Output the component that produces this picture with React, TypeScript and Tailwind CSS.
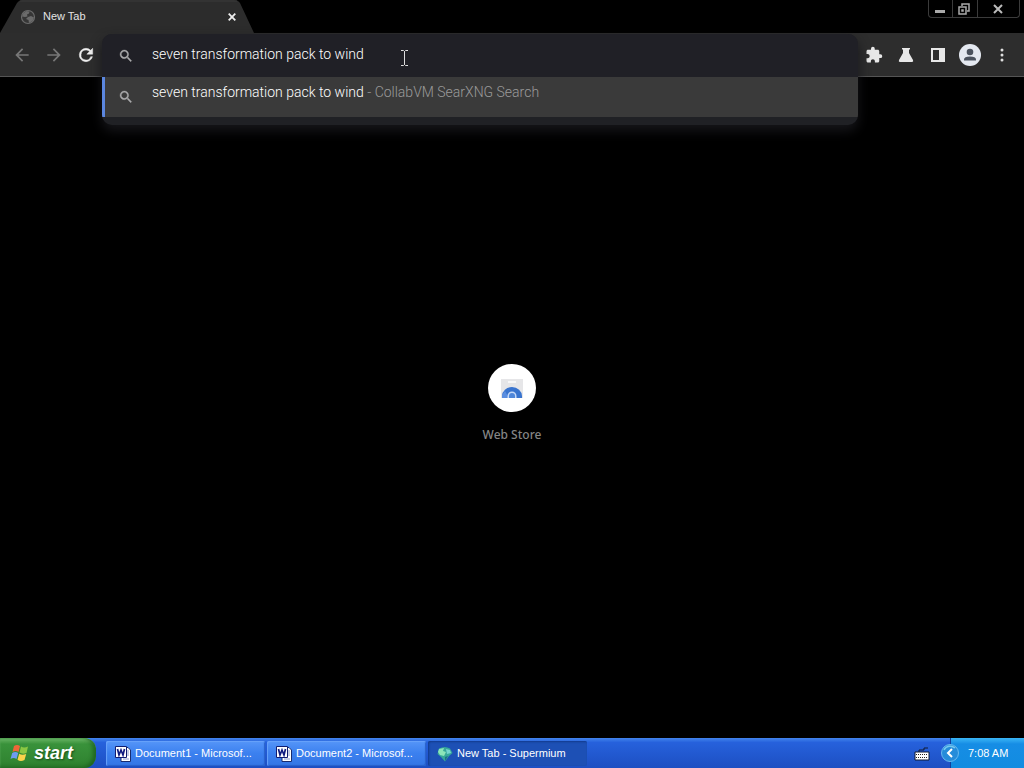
import { useState } from "react";
import type { ReactNode } from "react";

const query = "seven transformation pack to wind";

function SearchIcon() {
  return (
    <svg viewBox="0 0 24 24" className="size-4 shrink-0 fill-[#a9a9ab] stroke-[#a9a9ab]" strokeWidth="0.500" aria-hidden="true">
      <path d="M15.500 14h-.79l-.28-.27A6.470 6.470 0 0 0 16 9.500 6.500 6.500 0 1 0 9.500 16c1.610 0 3.090-.59 4.230-1.570l.27.28v.79l5 4.990L20.490 19zM9.500 14C7.010 14 5 11.990 5 9.500S7.010 5 9.500 5 14 7.010 14 9.500 11.990 14 9.500 14" />
    </svg>
  );
}

function ToolButton({ label, children }: { label: string; children: ReactNode }) {
  return (
    <button type="button" aria-label={label} className="flex size-8 shrink-0 items-center justify-center">
      {children}
    </button>
  );
}

function TabStrip() {
  return (
    <div className="flex h-[33px] items-start justify-between">
      <div className="relative h-full w-[256px]">
        <svg viewBox="0 0 256 33" preserveAspectRatio="none" className="absolute inset-0 size-full" aria-hidden="true">
          <path d="M0 33 17 3Q19 0 22 0H234Q238 0 240 3L254 33Z" fill="#2c2c2c" />
          <path d="M20 1H237" stroke="#3a3a3a" fill="none" />
        </svg>
        <div className="relative flex h-full items-center pr-4 pl-5">
          <svg viewBox="0 0 16 16" className="size-4" aria-hidden="true">
            <circle cx="8" cy="8" r="6.500" fill="#363636" stroke="#6b6b6b" strokeWidth="1.200" />
            <path d="M3 4.500 6.500 2l3 .5-.5 2-2 1 .5 2-2.500.5L2 7.500zM8 8l3-1 3 1.500-1.500 3.500L9 14 8.500 11 6 10z" fill="#6b6b6b" />
          </svg>
          <span className="ml-[7px] grow font-['Liberation_Sans',sans-serif] text-[11px] text-[#e4e4e4]">New Tab</span>
          <button type="button" aria-label="Close tab" className="flex size-4 items-center justify-center">
            <svg viewBox="0 0 8 8" className="size-2" aria-hidden="true">
              <path d="m.7.7 6.600 6.600m0-6.600L.7 7.300" stroke="#eee" strokeWidth="1.800" />
            </svg>
          </button>
        </div>
      </div>
      <div className="mr-1 flex h-[18px] divide-x divide-[#3b3b3b] rounded-b-sm border border-t-0 border-[#3b3b3b]">
        <button type="button" aria-label="Minimize" className="flex w-6 items-center justify-center pr-[2px]">
          <svg viewBox="0 0 12 12" className="size-3" aria-hidden="true">
            <path d="M1 7h10v3H1z" fill="#aaa" />
          </svg>
        </button>
        <button type="button" aria-label="Restore" className="flex w-[25px] items-center justify-center pr-[2px]">
          <svg viewBox="0 0 12 12" className="size-3" fill="none" stroke="#aaa" strokeWidth="1.500" aria-hidden="true">
            <path d="M4 3V1h7v7H9" />
            <path d="M1 4h7v7H1zM4 7h1v1H4z" />
          </svg>
        </button>
        <button type="button" aria-label="Close window" className="flex w-[41px] items-center justify-center pr-[2px]">
          <svg viewBox="0 0 10 10" className="size-[10px]" stroke="#bbb" strokeWidth="2" aria-hidden="true">
            <path d="m1 1 8 8m0-8L1 9" />
          </svg>
        </button>
      </div>
    </div>
  );
}

function Omnibox() {
  const [text, setText] = useState(query);
  return (
    <div className="relative z-10 grow self-stretch">
      <div className="absolute inset-x-0 top-px overflow-hidden rounded-[10px] bg-[#202125] shadow-[0_6px_12px_#16161a]">
        <div className="flex h-[43px] items-center bg-[#202026] pl-4">
          <SearchIcon />
          <input
            type="text"
            aria-label="Address and search bar"
            value={text}
            onChange={(e) => setText(e.target.value)}
            className="ml-[18px] grow bg-transparent pb-[2px] font-['Roboto',sans-serif] text-[14px] font-light text-white outline-none"
          />
        </div>
        <button
          type="button"
          className="flex h-10 w-full items-center border-l-3 border-[#5b86df] bg-[#3a3a3a] pl-[13px] text-left font-['Roboto',sans-serif] text-[14px] font-light"
        >
          <SearchIcon />
          <span className="ml-[18px] pb-[10px] whitespace-pre text-white">
            {query}
            <span className="text-[#9a9a9a]"> - CollabVM SearXNG Search</span>
          </span>
        </button>
        <div className="h-2" />
      </div>
      <svg viewBox="0 0 9 18" className="absolute top-4 left-[298px] h-[18px] w-[9px]" aria-hidden="true">
        <path d="M1 1.500h2.500l1 1 1-1H8M4.500 2v14M1 16.500h2.500l1-1 1 1H8" fill="none" stroke="#ddd" />
      </svg>
    </div>
  );
}

function Toolbar() {
  return (
    <div className="flex h-11 items-center border-b border-[#555] bg-[#2d2d2d] px-[6px]">
      <ToolButton label="Back">
        <svg viewBox="0 0 24 24" className="size-5 fill-[#777]" aria-hidden="true">
          <path d="M20 11H7.830l5.590-5.590L12 4l-8 8 8 8 1.410-1.410L7.830 13H20z" />
        </svg>
      </ToolButton>
      <ToolButton label="Forward">
        <svg viewBox="0 0 24 24" className="size-5 fill-[#777]" aria-hidden="true">
          <path d="m12 4-1.410 1.410L16.170 11H4v2h12.170l-5.580 5.590L12 20l8-8z" />
        </svg>
      </ToolButton>
      <ToolButton label="Reload">
        <svg viewBox="0 0 24 24" className="size-5 fill-[#eee] stroke-[#eee]" strokeWidth="0.600" aria-hidden="true">
          <path d="M17.650 6.350A7.960 7.960 0 0 0 12 4a8 8 0 1 0 7.730 10h-2.080A6 6 0 1 1 12 6c1.660 0 3.140.69 4.220 1.780L13 11h7V4z" />
        </svg>
      </ToolButton>
      <Omnibox />
      <ToolButton label="Extensions">
        <svg viewBox="0 0 24 24" className="size-[18px] fill-[#e8e8e8]" aria-hidden="true">
          <path d="M20.500 11H19V7c0-1.100-.9-2-2-2h-4V3.500a2.500 2.500 0 0 0-5 0V5H4c-1.100 0-1.990.9-1.990 2v3.800H3.500c1.490 0 2.700 1.210 2.700 2.700s-1.210 2.700-2.700 2.700H2V20c0 1.100.9 2 2 2h3.800v-1.500c0-1.490 1.210-2.700 2.700-2.700s2.700 1.210 2.700 2.700V22H17c1.100 0 2-.9 2-2v-4h1.500a2.500 2.500 0 0 0 0-5" />
        </svg>
      </ToolButton>
      <ToolButton label="Labs">
        <svg viewBox="0 0 16 16" className="size-4 fill-[#e8e8e8]" aria-hidden="true">
          <path d="M4 1h8v1.500h-1V6l4 7q.8 2-1 2H2q-1.800 0-1-2l4-7V2.500H4z" />
        </svg>
      </ToolButton>
      <ToolButton label="Side panel">
        <svg viewBox="0 0 16 16" className="size-4" aria-hidden="true">
          <path d="M1 1h14v14H1zM3 3v10h6V3z" fill="#e8e8e8" fillRule="evenodd" />
        </svg>
      </ToolButton>
      <ToolButton label="Profile">
        <svg viewBox="0 0 22 22" className="size-[22px]" aria-hidden="true">
          <circle cx="11" cy="11" r="11" fill="#e4e8f0" />
          <circle cx="11" cy="8" r="3.300" fill="#4b525e" />
          <path d="M5 16.500v-1Q5 12.500 11 12.500t6 3v1z" fill="#4b525e" />
        </svg>
      </ToolButton>
      <ToolButton label="Menu">
        <svg viewBox="0 0 4 14" className="h-[14px] w-1 fill-[#e0e0e0]" aria-hidden="true">
          <circle cx="2" cy="2" r="1.500" />
          <circle cx="2" cy="7" r="1.500" />
          <circle cx="2" cy="12" r="1.500" />
        </svg>
      </ToolButton>
    </div>
  );
}

function WordIcon() {
  return (
    <svg viewBox="0 0 16 16" className="size-4 shrink-0" aria-hidden="true">
      <path d="M6 1.500h7l2.500 2.500v11.500H6z" fill="#fff" stroke="#182c70" />
      <path d="M12 5h2M12 7h2M12 9h2M8 13h6" stroke="#8c9ccc" />
      <path d="M.5.5h11v11H.5z" fill="#fff" stroke="#101c70" />
      <path d="m2.500 3 1.500 6 2-5 2 5 1.500-6" fill="none" stroke="#101c80" strokeWidth="1.700" />
    </svg>
  );
}

function SupermiumIcon() {
  return (
    <svg viewBox="0 0 16 16" className="size-4 shrink-0" aria-hidden="true">
      <path d="M2 2.500Q8-.5 13 2.500L15.500 7 12 10 8 15.500 4 11 .5 8z" fill="#36a799" />
      <path d="m2 3 5-1-1 3 3 1-2 4-4-1-2-3z" fill="#8ce5b9" />
      <path d="m9 3 4 1 1 3-4 1z" fill="#76d5d0" />
      <path d="m8 11 3-1-3 5z" fill="#1e6d89" />
    </svg>
  );
}

function TaskButton({ label, active, children }: { label: string; active?: boolean; children: ReactNode }) {
  const tone = active
    ? "bg-[#1d50b5] shadow-[inset_1px_1px_2px_#123a8c]"
    : "bg-linear-to-b from-[#5595f8] via-[#3b80ef] to-[#3476e5] shadow-[inset_1px_1px_1px_#69a2fa,inset_-1px_-1px_1px_#2861c9]";
  return (
    <button
      type="button"
      className={`flex h-[25px] w-[159px] items-center gap-1 rounded-xs pl-[9px] text-[11px] whitespace-nowrap text-white ${tone}`}
    >
      {children}
      <span>{label}</span>
    </button>
  );
}

function Taskbar() {
  return (
    <footer className="flex h-[30px] shrink-0 items-stretch bg-linear-to-b from-[#4384ec] from-0% via-[#2661dc] via-15% to-[#1d4fc2] font-['Liberation_Sans',sans-serif]">
      <button
        type="button"
        className="flex w-24 items-center gap-1 rounded-r-xl bg-linear-to-b from-[#6cb866] from-0% via-[#39923b] via-20% to-[#2e812f] pl-[10px] shadow-[inset_-3px_-1px_4px_#1e641f,inset_0_2px_2px_#67b566]"
      >
        <svg viewBox="0 0 20 20" className="size-5" aria-hidden="true">
          <path d="M4 3q3-2 6 0L8.500 9Q5.500 7 2.500 9z" fill="#ef6638" />
          <path d="M11 3.500q3 2 7 0L16.500 10q-4 1.500-7-.5z" fill="#8bc743" />
          <path d="M2.200 10q3-2 6 0L6.500 16q-3-2-6 0z" fill="#6e9cf0" />
          <path d="M9.200 10.700q3 2 7 .3L14.500 17q-4 2-7-.3z" fill="#fbd34b" />
        </svg>
        <span className="text-[18px] leading-none font-bold text-white italic [text-shadow:1px_1px_2px_#174d18]">start</span>
      </button>
      <nav aria-label="Running programs" className="ml-[10px] flex items-center gap-[2px] pt-px">
        <TaskButton label="Document1 - Microsof...">
          <WordIcon />
        </TaskButton>
        <TaskButton label="Document2 - Microsof...">
          <WordIcon />
        </TaskButton>
        <TaskButton label="New Tab - Supermium" active>
          <SupermiumIcon />
        </TaskButton>
      </nav>
      <div className="grow" />
      <div className="flex items-center pt-px">
        <svg viewBox="0 0 16 14" className="h-[14px] w-4" aria-hidden="true">
          <path d="M5 5V3h5V1h4" fill="none" stroke="#111b33" />
          <path d="M1 5h14v8H1z" fill="#fff" stroke="#111b33" />
          <path d="M2 7.500h12M2 10.500h12" stroke="#222" strokeDasharray="1 1" />
        </svg>
      </div>
      <div className="ml-5 flex w-[74px] items-center border-l border-[#123f9c] bg-linear-to-b from-[#39b5f5] from-0% via-[#168de5] via-20% to-[#128ce0]">
        <button type="button" aria-label="Show hidden icons" className="-ml-[10px] shrink-0">
          <svg viewBox="0 0 18 18" className="size-[18px]" aria-hidden="true">
            <circle cx="9" cy="9" r="8.500" fill="#258cda" stroke="#69b9ee" />
            <path d="M3 6a7 7 0 0 1 11-2" fill="none" stroke="#76c9ef" strokeWidth="1.500" />
            <path d="M11 5 7 9l4 4" fill="none" stroke="#fff" strokeWidth="2" />
          </svg>
        </button>
        <time className="ml-[9px] text-[11px] whitespace-nowrap text-white">7:08 AM</time>
      </div>
    </footer>
  );
}

export default function App() {
  return (
    <div className="flex min-h-screen flex-col bg-black font-['Noto_Sans',sans-serif]">
      <header>
        <TabStrip />
        <Toolbar />
      </header>
      <main className="flex grow flex-col items-center justify-center pb-[6px]">
        <a href="#web-store" className="flex flex-col items-center gap-[13px]">
          <span className="flex size-12 items-center justify-center rounded-full bg-white">
            <svg viewBox="0 0 24 24" className="size-6" aria-hidden="true">
              <path d="M1 3h22v19H1z" fill="#e6e6e8" />
              <path d="M8 5h8v2H8z" fill="#f8f8f8" />
              <path d="M2 22v-2a10 9 0 0 1 20 0v2z" fill="#3974ce" />
              <path d="M2 22v-3l3-4 4 7z" fill="#5a8ee0" />
              <path d="M7.500 22v-2a4.500 4.500 0 0 1 9 0v2z" fill="#c5d9f8" />
              <path d="M9 22v-2a3 3 0 0 1 6 0v2z" fill="#4f87da" />
            </svg>
          </span>
          <span className="text-[12px] leading-5 font-medium text-[#858585]">Web Store</span>
        </a>
      </main>
      <Taskbar />
    </div>
  );
}
